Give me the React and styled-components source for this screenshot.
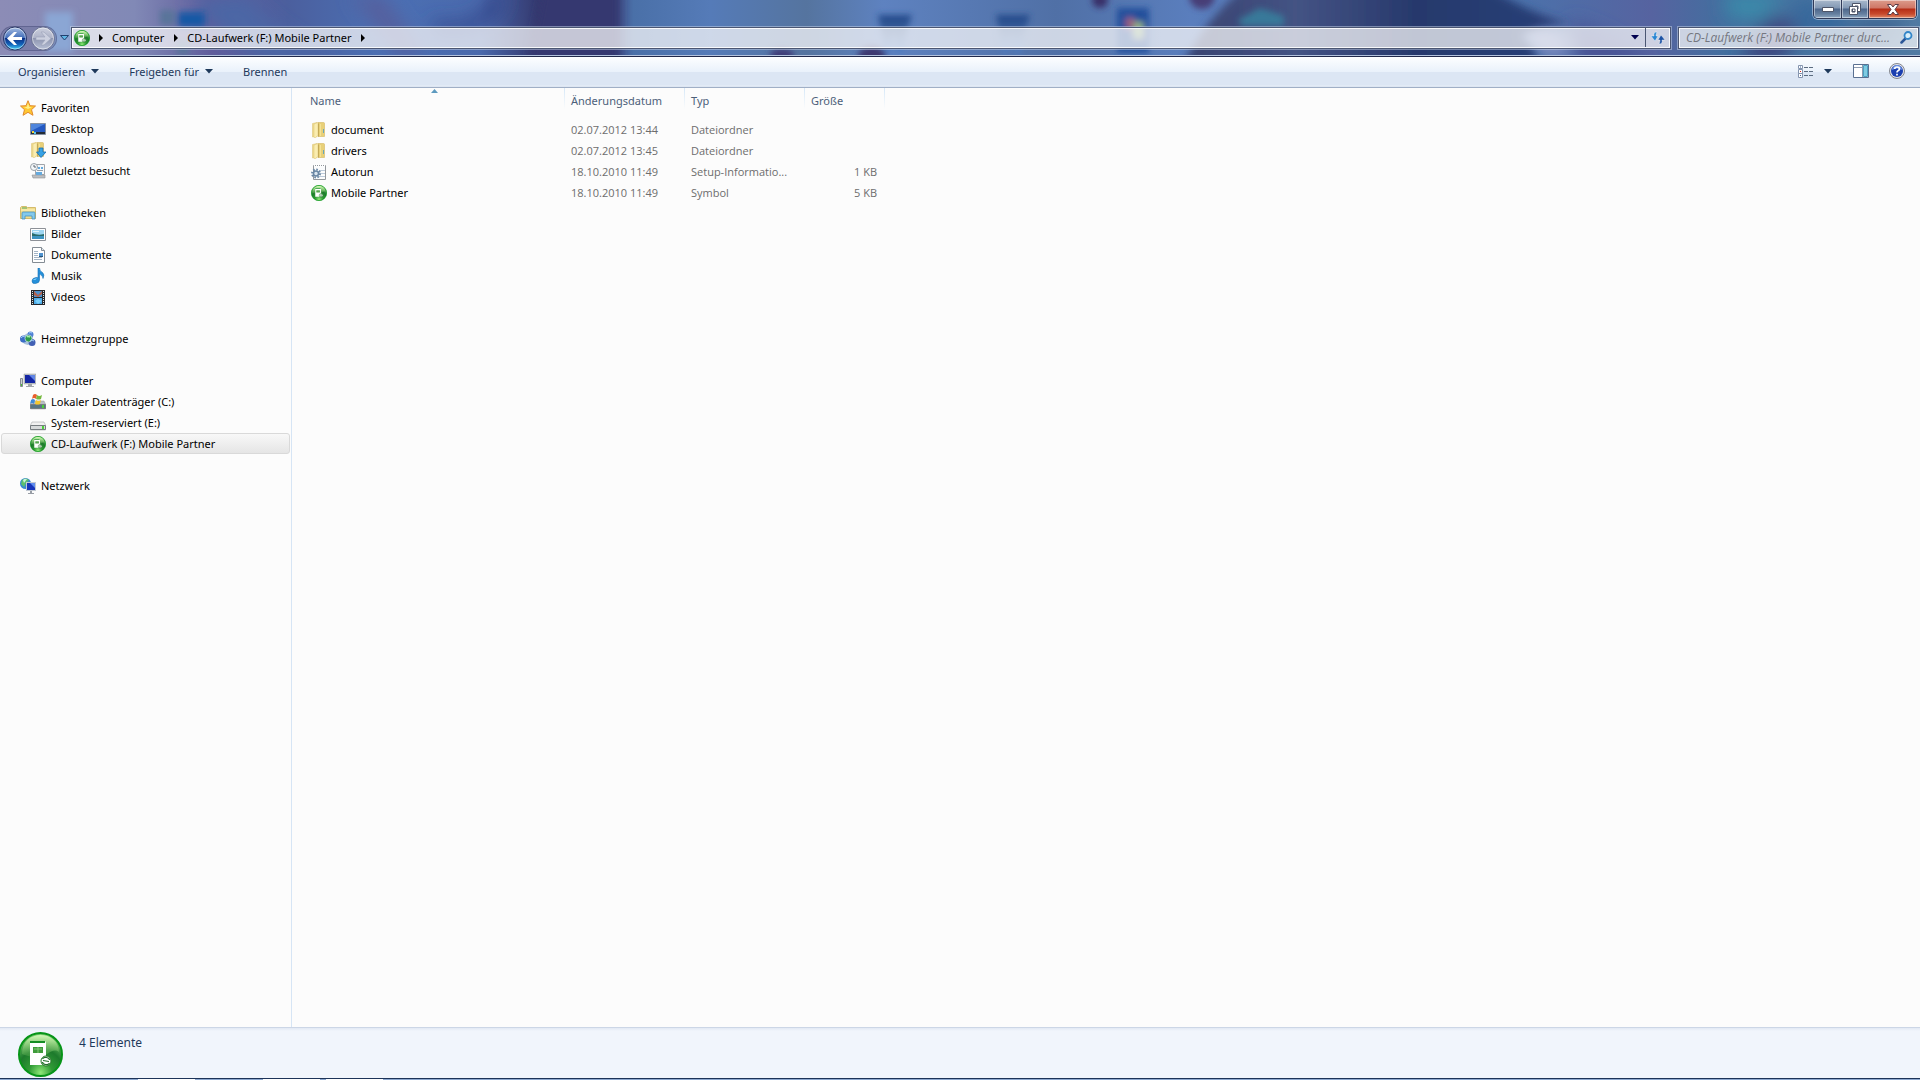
import React from "react";
import styled, { createGlobalStyle, css } from "styled-components";

const GlobalStyle = createGlobalStyle`
  * {
    box-sizing: border-box;
  }

  body {
    margin: 0;
    background: #fcfcfc;
    color: #000;
    font-family: "Noto Sans", "Open Sans", sans-serif;
    font-size: 11px;
    line-height: 21px;
  }

  button, input {
    font: inherit;
    color: inherit;
    margin: 0;
    padding: 0;
    border: 0;
    background: none;
  }

  svg {
    display: block;
    flex: none;
  }
`;

/* WINDOW */
const Window = styled.div`
  display: flex;
  flex-direction: column;
  min-height: 100vh;
`;

/* GLASS FRAME */
const Glass = styled.header`
  position: relative;
  isolation: isolate;
  height: 57px;
  overflow: hidden;
  border-bottom: 1px solid #20284a;
  box-shadow: inset 0 -1px 0 #b4c3de;
`;

const Wallpaper = styled.svg`
  position: absolute;
  z-index: -1;
  top: 0;
  left: 0;
  width: 100%;
  height: 55px;
`;

const TitleRow = styled.div`
  display: flex;
  justify-content: flex-end;
  height: 26px;
  padding-right: 3px;
`;

const WindowButtons = styled.div`
  display: flex;
  height: 19px;
  border: 1px solid #303a58;
  border-top: 0;
  border-radius: 0 0 5px 5px;
  overflow: hidden;
  box-shadow: 0 0 0 1px rgba(220, 232, 248, 0.5);
`;

const WindowButton = styled.button`
  display: flex;
  align-items: center;
  justify-content: center;
  width: ${({ $close }) => ($close ? "48px" : "27px")};
  box-shadow: inset 0 0 0 1px rgba(255, 255, 255, 0.45);
  background: ${({ $close }) =>
    $close
      ? "linear-gradient(#dc9c8c 0, #cf7665 8px, #b52d16 9px, #c84a2c 14px, #e08a68 18px)"
      : "linear-gradient(#a9b9cc 0, #8298b4 8px, #4d678c 9px, #66809f 14px, #8ea8c2 18px)"};

  & + & {
    border-left: 1px solid #303a58;
  }
`;

const NavRow = styled.div`
  display: flex;
  align-items: center;
  height: 24px;
`;

const TravelButtons = styled.div`
  display: flex;
  align-items: center;
  gap: 4px;
  width: 57px;
  height: 25px;
  padding-left: 3px;
  border-radius: 13px;
  background: rgba(90, 96, 140, 0.3);
  box-shadow: inset 0 0 0 1px rgba(60, 66, 110, 0.4);
`;

const PlainButton = styled.button`
  display: flex;
  align-items: center;
  justify-content: center;
`;

const RecentButton = styled(PlainButton)`
  width: 14px;
`;

const glassField = css`
  display: flex;
  align-items: center;
  height: 22px;
  border: 1px solid #4b5672;
  background: rgba(248, 248, 250, 0.74);
  box-shadow: inset 0 0 0 1px rgba(255, 255, 255, 0.85), 0 0 0 1px rgba(200, 212, 232, 0.5);
`;

const AddressBar = styled.nav`
  ${glassField}
  flex: 1;
  padding: 0 0 1px 2px;
`;

const Crumb = styled.button`
  display: flex;
  align-items: center;
  height: 19px;
`;

const CrumbArrow = styled.span`
  display: flex;
  justify-content: center;
  width: ${({ $first }) => ($first ? "22px" : "23px")};
`;

const AddressTools = styled.div`
  display: flex;
  align-self: stretch;
  margin-left: auto;
`;

const AddressTool = styled(PlainButton)`
  width: ${({ $wide }) => ($wide ? "25px" : "20px")};
  border-left: ${({ $wide }) => ($wide ? "1px solid #4b5672" : "0")};
`;

const SearchBox = styled.label`
  ${glassField}
  width: 241px;
  margin: 0 1px 0 7px;
  padding: 0 5px 1px 7px;
`;

const SearchInput = styled.input`
  flex: 1;
  min-width: 0;
  height: 19px;
  outline: 0;
  font-family: "Open Sans", sans-serif;

  &::placeholder {
    color: #757780;
    font-size: 12px;
    font-style: italic;
    opacity: 1;
  }
`;

/* COMMAND BAR */
const CommandBar = styled.div`
  display: flex;
  align-items: center;
  height: 31px;
  padding: 0 15px 2px 18px;
  color: #1e395b;
  border-bottom: 1px solid #a0afc6;
  background: linear-gradient(#fdfeff 0, #e9f1fb 15px, #dce6f4 15px, #dce6f4 28px, #e8eff8 29px, #d3ddec 30px);
`;

const Command = styled.button`
  display: flex;
  align-items: center;
  gap: 6px;
  height: 28px;
  margin-right: 30px;
`;

const CommandIcons = styled.div`
  display: flex;
  align-items: center;
  margin-left: auto;
`;

const IconButton = styled(PlainButton)`
  margin-left: ${({ $gap }) => $gap}px;
`;

/* CONTENT */
const Content = styled.div`
  display: flex;
  flex: 1;
`;

const Sidebar = styled.aside`
  width: 292px;
  padding: 9px 1px 0;
  border-right: 1px solid #d6e5f5;
`;

const TreeGroup = styled.section`
  margin-bottom: 21px;
`;

const TreeItem = styled.a`
  display: flex;
  align-items: center;
  gap: 5px;
  height: 21px;
  padding-left: ${({ $child }) => ($child ? "28px" : "18px")};
  border: 1px solid transparent;
  border-radius: 3px;
  color: #000;
  text-decoration: none;

  ${({ $selected }) =>
    $selected &&
    css`
      border-color: #d9d9d9;
      background: linear-gradient(#f8f8f8, #e5e5e5);
    `}
`;

const Files = styled.main`
  flex: 1;
  padding-left: 12px;
`;

const FileTable = styled.table`
  width: 581px;
  table-layout: fixed;
  border-collapse: separate;
  border-spacing: 0;
`;

const HeadCell = styled.th`
  position: relative;
  width: ${({ $width }) => $width}px;
  height: 31px;
  padding: 2px 6px 8px;
  color: #4c607a;
  font-weight: 400;
  text-align: left;
  background: linear-gradient(#d6e8f8, #fcfcfc) right top / 1px 21px no-repeat;
`;

const SortMark = styled.svg`
  position: absolute;
  top: 1px;
  left: 50%;
  margin-left: -4px;
`;

const Cell = styled.td`
  height: 21px;
  padding: 0 8px 0 6px;
  color: #6d6d6d;
  font-family: "Open Sans", sans-serif;
  overflow: hidden;
  white-space: nowrap;
  text-overflow: ellipsis;
  text-align: ${({ $right }) => ($right ? "right" : "left")};
`;

const FileName = styled.div`
  display: flex;
  align-items: center;
  gap: 4px;
  padding-left: 1px;
  color: #000;
  font-family: "Noto Sans", "Open Sans", sans-serif;
`;

/* DETAILS PANE */
const Details = styled.footer`
  display: flex;
  gap: 16px;
  height: 51px;
  padding: 4px 18px 0;
  overflow: hidden;
  color: #1e395b;
  font-size: 12px;
  border-top: 1px solid #ccd6e6;
  background: linear-gradient(#e2e9f4 0, #f1f5fc 3px);
`;

const Taskbar = styled.div`
  display: flex;
  gap: 6px;
  height: 2px;
  padding-left: 138px;
  border-top: 1px solid #1d3358;
  background: #8da8d0;
`;

const TaskSlot = styled.span`
  width: 57px;
  margin-right: ${({ $gap }) => $gap || 0}px;
  background: #fff;
`;

/* ICONS */
const PartnerIcon = ({ size = 16 }) => (
  <svg width={size} height={size} viewBox="0 0 45 45">
    <defs>
      <radialGradient id="partner" cx="50%" cy="92%" r="90%">
        <stop offset="0" stopColor="#8ee878" />
        <stop offset="0.3" stopColor="#2f9a35" />
        <stop offset="0.6" stopColor="#1d7a2c" />
        <stop offset="1" stopColor="#7ed070" />
      </radialGradient>
      <linearGradient id="partnerShine" x2="0" y2="1">
        <stop offset="0" stopColor="#d4f8b8" />
        <stop offset="1" stopColor="#62b553" stopOpacity="0.3" />
      </linearGradient>
    </defs>
    <circle cx="22.500" cy="22.500" r="21.500" fill="url(#partner)" stroke="#079518" strokeWidth="2" />
    <path d="M4 22C4 9 13 3 22.500 3S41 9 41 20c-7-5-12 5-20 5S9 24 4 22z" fill="url(#partnerShine)" />
    <path d="M12 11q0-2 2-2h12q2 0 2 2v15a6 6 0 0 0-4 7H12z" fill="#fff" />
    <path d="M12 9h15v2H12z" fill="#168d24" />
    <path d="M15 15h10v6H15z" fill="#3f9b3b" />
    <path d="M16 17h8M20 15v6" stroke="#85c878" />
    <circle cx="28" cy="29" r="5" fill="#fff" stroke="#287a2b" />
    <path d="M24.500 27q1-2 4-1.500t3 2.500M31.500 31q-1 2-4 1.500t-3-2.500M25 28.500l6 1" fill="none" stroke="#226f2b" strokeWidth="1.200" />
  </svg>
);

const StarIcon = () => (
  <svg width="16" height="16">
    <path d="M8 .7l2 5 5.500.3-4 3.700L13 15.300l-5-3-5 3 1.500-5.600L.5 6 6 5.700z" fill="#ffc832" stroke="#e08a2e" />
    <path d="M8 3l1.300 4H12L8 9 4 7h2.700z" fill="#fff08a" />
  </svg>
);

const DesktopIcon = () => (
  <svg width="16" height="16">
    <path d="M.5 2.500h15v11H.5z" fill="#2459c2" stroke="#8792a2" />
    <path d="M1 3h14L1 10z" fill="#4f85dc" />
    <path d="M1 11h14v2H1z" fill="#232b36" />
    <path d="M2 10h2v2H2z" fill="#f2d43a" />
    <path d="M4 11h2v2H4z" fill="#55c4ea" />
  </svg>
);

const FolderIcon = ({ download }) => (
  <svg width="16" height="16">
    <path d="M1.500 1.500L6 .5v14l-4.500.5z" fill="#efdc8c" stroke="#d8bf6c" strokeWidth=".5" />
    <path d="M7 .5h5.500q1 0 1 1v13H7z" fill="#e8d078" stroke="#cfae50" strokeWidth=".5" />
    <path d="M3 2l4-1.500v13L4 16l-1-1z" fill="#faedb0" stroke="#dcc478" strokeWidth=".5" />
    <path d="M7 1.500h1V14l-1 1z" fill="#c4a956" />
    <path d="M9 2h1v12H9z" fill="#f4e296" />
    {download ? (
      <path d="M9 6h4v4h3l-5 5.500L6.500 10H9z" fill="#38a2e4" stroke="#176daf" strokeWidth=".8" />
    ) : (
      <path d="M12 7h1v4h-1z" fill="#6aa7b6" />
    )}
  </svg>
);

const RecentIcon = () => (
  <svg width="16" height="16">
    <path d="M5.500 1.500h9v10h-9z" fill="#f6f8fa" stroke="#a1a5aa" />
    <path d="M2 12h13v3H3z" fill="#bcbec0" stroke="#8f9295" strokeWidth=".6" />
    <circle cx="4" cy="4" r="3.500" fill="#f4f7f9" stroke="#9aa2a9" />
    <path d="M4 2v2h2" fill="none" stroke="#5b6570" />
    <path d="M8 4h2v2H8zM11 4h2v2h-2zM6 9h6v3H6z" fill="#64aade" />
    <path d="M7 7.500h6" stroke="#98a0a7" />
  </svg>
);

const LibraryIcon = () => (
  <svg width="16" height="16">
    <path d="M.5 2.500l1-1h5l1 1h8v11H.5z" fill="#f0dc8c" stroke="#d4bb6c" />
    <path d="M2 3h5" stroke="#56aa58" />
    <path d="M1 5h14" stroke="#fff5c0" />
    <path d="M2 14V8q0-1 1-1h11q1 0 1 1v6h-3v-3H5v3z" fill="#83c9ec" stroke="#4792c0" strokeWidth=".8" />
  </svg>
);

const PictureIcon = () => (
  <svg width="16" height="16">
    <path d="M.5 2.500h15v12H.5z" fill="#fff" stroke="#8d9197" />
    <path d="M2 4h12v9H2z" fill="#9ed6f2" />
    <path d="M2 7q6 3 12 1v3H2z" fill="#286c6b" />
    <path d="M2 10h12v3H2z" fill="#3c94c2" />
    <path d="M3 5h6v1H3z" fill="#e4f6fc" />
  </svg>
);

const DocumentIcon = () => (
  <svg width="16" height="16">
    <path d="M2.500.5h9l3 3v12h-12z" fill="#fff" stroke="#848c94" />
    <path d="M11.500.5v3h3" fill="#e2e9ef" stroke="#848c94" />
    <path d="M4 4.500h4M4 6.500h4M4 8.500h4M4 10.500h8M4 12.500h8" stroke="#a3b4c6" />
    <path d="M9 6h4v4H9z" fill="#4f93d0" />
    <path d="M9 9h4v1H9z" fill="#28567a" />
  </svg>
);

const MusicIcon = () => (
  <svg width="16" height="16">
    <path d="M8 0h1.500q0 3 3 4.500 2.500 2 .5 6 0-3-3.500-4.500V12q0 3-4 3.500Q2 16 2 13t4-3.500q1.500-.3 2 .3z" fill="#2590da" stroke="#1670b5" strokeWidth=".6" />
    <path d="M3 12q1-2 4-1.500Q6 12 3 12z" fill="#8ddaff" />
  </svg>
);

const VideoIcon = () => (
  <svg width="16" height="16">
    <path d="M1 1h14v15H1z" fill="#25282c" />
    <path d="M4 2h8v6H4z" fill="#4c91cc" />
    <path d="M4 9h8v6H4z" fill="#4daae6" />
    <path d="M4 2l4 4 4-4v3L8 8 4 6z" fill="#b2604c" />
    <path d="M5 12l3-2 4 2-4 3z" fill="#78d0fc" />
    <path d="M2.500 2v13M13.500 2v13" stroke="#e0e4e6" strokeDasharray="1 1" />
  </svg>
);

const HomegroupIcon = () => (
  <svg width="16" height="16">
    <path d="M3 6Q8-1 13 5v6q-5 6-11 0z" fill="#a8c2dc" />
    <circle cx="10.500" cy="3.500" r="3" fill="#4f80d4" />
    <circle cx="3.500" cy="8" r="3.500" fill="#3c6ec6" />
    <circle cx="12" cy="11.500" r="3.500" fill="#4260b4" />
    <circle cx="8.500" cy="7.500" r="3.500" fill="#2c9b4a" stroke="#d4e4ee" strokeWidth=".7" />
    <path d="M1 7q2-3 4-1M10 10q2-2 4 0M9 2q2-1 3 0" fill="none" stroke="#a0cdf7" />
    <path d="M7 6q1-1 3 0" fill="none" stroke="#a6efaa" strokeWidth="1.500" />
  </svg>
);

const ComputerIcon = () => (
  <svg width="16" height="16">
    <path d="M.5 5.500h2v8h-2z" fill="#ccd1d4" stroke="#858b91" />
    <path d="M1 11h1v2H1z" fill="#4ebd3c" />
    <path d="M4 1h12v10H4z" fill="#bfc3c6" stroke="#969a9e" strokeWidth=".5" />
    <path d="M5 2h10v8H5z" fill="#1426a4" />
    <path d="M9 2h6v6z" fill="#6085e5" />
    <path d="M8 11h4v2h2v1H6v-1h2z" fill="#a2a6aa" />
  </svg>
);

const DriveIcon = ({ system }) => (
  <svg width="16" height="16">
    <path d="M2 7h12l2 4v3q0 1-1 1H1q-1 0-1-1v-3z" fill={system ? "#b7bec4" : "#f1f1f1"} stroke="#969a9d" strokeWidth=".5" />
    <path d="M.5 10.500h15v4H.5z" fill={system ? "#577583" : "#d7dadb"} stroke="#777d81" />
    <path d="M12 11h2v3h-2z" fill="#4ccf38" />
    {system && (
      <>
        <path d="M3 1q2-2 4 0L6 5Q4 3 2 5z" fill="#e95e2c" />
        <path d="M7 1q2 2 5 0l-1 4q-2 1-5 0z" fill="#75b93e" />
        <path d="M1 6q2-2 4 0l-1 4q-2-2-4 0z" fill="#3f8bd8" />
        <path d="M6 6q2 2 5 0l-1 4q-2 1-5 0z" fill="#f6c82d" />
      </>
    )}
  </svg>
);

const NetworkIcon = () => (
  <svg width="16" height="16">
    <circle cx="5.500" cy="5.500" r="5.500" fill="#3988d2" />
    <path d="M2 2q4-3 7 0L6 5 4 9 1 6z" fill="#5dc06c" />
    <path d="M3 2q2-2 4-1L4 5z" fill="#c8f2dc" />
    <path d="M6 4h10v9H6z" fill="#c2c9d3" />
    <path d="M7 5h8v7H7z" fill="#1735ba" />
    <path d="M10 5h5v5z" fill="#5e8cee" />
    <path d="M10 13h2v2h2v1H8v-1h2z" fill="#989da5" />
  </svg>
);

const SetupIcon = () => (
  <svg width="16" height="16">
    <path d="M2.500 1.500h12v14h-12z" fill="#fbfcfd" stroke="#92979c" />
    <path d="M3 1.500h12" stroke="#fff" strokeWidth="2" strokeDasharray="1 1" />
    <path d="M8 6.500h6M8 9.500h6M8 12.500h6" stroke="#bccada" />
    <circle cx="5" cy="9.500" r="4" fill="none" stroke="#6a87a4" strokeWidth="2" strokeDasharray="1.600 1.500" />
    <circle cx="5" cy="9.500" r="2.500" fill="#dbe6ef" stroke="#6a87a4" strokeWidth="1.500" />
  </svg>
);

const TravelIcon = ({ back }) => (
  <svg width="24" height="25" viewBox="0 0 24 25">
    <defs>
      <linearGradient id="backFill" x2="0" y2="1">
        <stop offset="0" stopColor="#a9c0e4" />
        <stop offset=".48" stopColor="#3f6bb8" />
        <stop offset=".5" stopColor="#0b3188" />
        <stop offset=".75" stopColor="#1261b8" />
        <stop offset="1" stopColor="#48dcff" />
      </linearGradient>
      <linearGradient id="forwardFill" x2="0" y2="1">
        <stop offset="0" stopColor="#cdd1df" />
        <stop offset=".48" stopColor="#adb2c7" />
        <stop offset=".5" stopColor="#8e95b0" />
        <stop offset="1" stopColor="#b9c2d7" />
      </linearGradient>
    </defs>
    <circle cx="12" cy="12.500" r="11.500" fill={back ? "url(#backFill)" : "url(#forwardFill)"} stroke={back ? "#2b3967" : "#6a7293"} />
    <circle cx="12" cy="12.500" r="10.500" fill="none" stroke="#fff" strokeOpacity=".5" />
    {back ? (
      <path d="M4 12.500l7-6.500h3l-4 5h9v3h-9l4 5h-3z" fill="#fff" />
    ) : (
      <path d="M20 12.500L13 6h-3l4 5H5v3h9l-4 5h3z" fill="#ccd0df" stroke="#9aa2b9" strokeWidth=".6" />
    )}
  </svg>
);

const DownArrow = ({ color = "#1e395b" }) => (
  <svg width="8" height="5">
    <path d="M0 0h8L4 4.500z" fill={color} />
  </svg>
);

const RightArrow = () => (
  <svg width="4" height="8">
    <path d="M0 0l4 4-4 4z" fill="#000" />
  </svg>
);

/* blurred desktop that shines through the frame */
const Desktop = () => (
  <Wallpaper viewBox="0 0 1920 55" preserveAspectRatio="none" aria-hidden="true">
    <defs>
      <linearGradient id="sky">
        <stop offset="0" stopColor="#8c8cb6" />
        <stop offset=".07" stopColor="#8189b6" />
        <stop offset=".11" stopColor="#605d9c" />
        <stop offset=".15" stopColor="#4b5f9e" />
        <stop offset=".2" stopColor="#4b70b4" />
        <stop offset=".25" stopColor="#4a69ac" />
        <stop offset=".28" stopColor="#34396f" />
        <stop offset=".315" stopColor="#373873" />
        <stop offset=".33" stopColor="#4a70a8" />
        <stop offset=".37" stopColor="#557bb8" />
        <stop offset=".42" stopColor="#55749f" />
        <stop offset=".46" stopColor="#5e82c0" />
        <stop offset=".55" stopColor="#5070a6" />
        <stop offset=".62" stopColor="#5a7ebd" />
        <stop offset=".79" stopColor="#4b72ab" />
        <stop offset=".86" stopColor="#5663a0" />
        <stop offset=".9" stopColor="#426f9f" />
        <stop offset="1" stopColor="#517ba3" />
      </linearGradient>
      <linearGradient id="hill">
        <stop offset="0" stopColor="#38426f" />
        <stop offset=".3" stopColor="#445384" />
        <stop offset=".6" stopColor="#27396c" />
        <stop offset="1" stopColor="#293f78" />
      </linearGradient>
      <linearGradient id="letter" x2="0" y2="1">
        <stop offset="0" stopColor="#1f4688" />
        <stop offset=".5" stopColor="#41659f" />
        <stop offset="1" stopColor="#4f80c8" />
      </linearGradient>
      <filter id="far" x="-100%" y="-100%" width="300%" height="300%">
        <feGaussianBlur stdDeviation="9" />
      </filter>
      <filter id="soft" x="-20%" y="-50%" width="140%" height="200%">
        <feGaussianBlur stdDeviation="4" />
      </filter>
      <filter id="softer" x="-20%" y="-50%" width="140%" height="200%">
        <feGaussianBlur stdDeviation="3" />
      </filter>
    </defs>
    <path d="M0 0h1920v57H0z" fill="url(#sky)" />
    <g filter="url(#far)">
      <path d="M190 0q30 40 80 60h60Q260 20 250-5z" fill="#4b66a5" />
      <path d="M350-5q20 25 45 60h30Q400 20 385-5z" fill="#54619f" />
      <path d="M430 20q50 10 60-25h18q-10 40-70 38z" fill="#344a8e" />
      <path d="M1515 26q30 0 55 18l-10 14q-30-10-45-32z" fill="#8d96c8" />
      <path d="M1570 20q60 20 80 45h-70z" fill="#485394" />
      <path d="M1725-5h60l-25 25-32-4z" fill="#3b8baa" />
      <path d="M1760 25q28-18 40 8l-20 30h-40z" fill="#3c467f" />
      <path d="M1790 0h50l10 40h-50z" fill="#39699c" />
      <path d="M1860 20h50l-40 40h-40z" fill="#3d6390" />
    </g>
    <g filter="url(#soft)">
      <path d="M545-20h75v95h-95z" fill="#34376f" />
      <path d="M1180 70q30-60 75-90h225q35 28 90 44-30 0-50 12 15 10 20 34z" fill="url(#hill)" />
    </g>
    <g filter="url(#softer)">
      <path d="M45 12h28v40H45z" fill="#8cacdc" opacity=".8" />
      <path d="M178 12h27v15h-27z" fill="#1459a5" />
      <path d="M160 10h15v15h-15zM177 40h12v15h-12z" fill="#58749a" />
      <path d="M878 15h34l-4 12-6 26h-5l-3-20-4 20h-5zM996 15h34l-4 12-6 26h-5l-3-20-4 20h-5z" fill="url(#letter)" />
      <path d="M1117 8h32v45h-32z" fill="#214f9b" />
      <path d="M1126 18h8v10h-8z" fill="#a0607a" />
      <path d="M1134 22h9v16h-9z" fill="#95b582" />
      <circle cx="1100" cy="0" r="8" fill="#382e68" />
      <circle cx="1202" cy="-4" r="13" fill="#463d76" />
      <ellipse cx="782" cy="56" rx="12" ry="8" fill="#413c78" />
      <ellipse cx="872" cy="56" rx="14" ry="10" fill="#3d3870" />
      <path d="M1238 20l22-12 24 8v10h-42z" fill="#39799a" />
    </g>
  </Wallpaper>
);

const tree = [
  {
    label: "Favoriten",
    icon: <StarIcon />,
    items: [
      { label: "Desktop", icon: <DesktopIcon /> },
      { label: "Downloads", icon: <FolderIcon download /> },
      { label: "Zuletzt besucht", icon: <RecentIcon /> },
    ],
  },
  {
    label: "Bibliotheken",
    icon: <LibraryIcon />,
    items: [
      { label: "Bilder", icon: <PictureIcon /> },
      { label: "Dokumente", icon: <DocumentIcon /> },
      { label: "Musik", icon: <MusicIcon /> },
      { label: "Videos", icon: <VideoIcon /> },
    ],
  },
  { label: "Heimnetzgruppe", icon: <HomegroupIcon />, items: [] },
  {
    label: "Computer",
    icon: <ComputerIcon />,
    items: [
      { label: "Lokaler Datenträger (C:)", icon: <DriveIcon system /> },
      { label: "System-reserviert (E:)", icon: <DriveIcon /> },
      { label: "CD-Laufwerk (F:) Mobile Partner", icon: <PartnerIcon />, selected: true },
    ],
  },
  { label: "Netzwerk", icon: <NetworkIcon />, items: [] },
];

const files = [
  { name: "document", icon: <FolderIcon />, date: "02.07.2012 13:44", type: "Dateiordner", size: "" },
  { name: "drivers", icon: <FolderIcon />, date: "02.07.2012 13:45", type: "Dateiordner", size: "" },
  { name: "Autorun", icon: <SetupIcon />, date: "18.10.2010 11:49", type: "Setup-Informatio...", size: "1 KB" },
  { name: "Mobile Partner", icon: <PartnerIcon />, date: "18.10.2010 11:49", type: "Symbol", size: "5 KB" },
];

export default function App() {
  return (
    <Window>
      <GlobalStyle />
      <Glass>
        <Desktop />
        <TitleRow>
          <WindowButtons>
            <WindowButton aria-label="Minimieren">
              <svg width="12" height="8">
                <path d="M.5 2.500h11v4H.5z" fill="#fff" stroke="#4d5568" />
              </svg>
            </WindowButton>
            <WindowButton aria-label="Verkleinern">
              <svg width="12" height="12" fillRule="evenodd">
                <path d="M3.500.5h8v8h-8zM6 3v3h3V3z" fill="#fff" stroke="#4d5568" />
                <path d="M.5 3.500h8v8h-8zM3 6v3h3V6z" fill="#fff" stroke="#4d5568" />
              </svg>
            </WindowButton>
            <WindowButton $close aria-label="Schließen">
              <svg width="12" height="11">
                <path d="M.5.5h3.500l2 2.500L8 .5h3.500l-3.500 5 3.500 5H8L6 8l-2 2.500H.5l3.500-5z" fill="#fff" stroke="#5a3c48" />
              </svg>
            </WindowButton>
          </WindowButtons>
        </TitleRow>
        <NavRow>
          <TravelButtons>
            <PlainButton aria-label="Zurück">
              <TravelIcon back />
            </PlainButton>
            <PlainButton aria-label="Vorwärts">
              <TravelIcon />
            </PlainButton>
          </TravelButtons>
          <RecentButton aria-label="Zuletzt besuchte Seiten">
            <svg width="9" height="6">
              <path d="M.5.5h8l-4 4.500z" fill="#5fb6e6" stroke="#20406f" />
            </svg>
          </RecentButton>
          <AddressBar aria-label="Adresse">
            <PartnerIcon />
            <CrumbArrow $first>
              <RightArrow />
            </CrumbArrow>
            <Crumb>Computer</Crumb>
            <CrumbArrow>
              <RightArrow />
            </CrumbArrow>
            <Crumb>CD-Laufwerk (F:) Mobile Partner</Crumb>
            <CrumbArrow>
              <RightArrow />
            </CrumbArrow>
            <AddressTools>
              <AddressTool aria-label="Vorherige Adressen">
                <DownArrow color="#000050" />
              </AddressTool>
              <AddressTool $wide aria-label="Aktualisieren">
                <svg width="14" height="14">
                  <path d="M6 1Q2 1 3 5H0l4 5 3-5H5q0-2 1-4z" fill="#2a86d2" stroke="#fff" strokeWidth=".4" />
                  <path d="M8 13q4 0 3-4h3l-4-5-3 5h2q0 2-1 4z" fill="#1c52a4" stroke="#fff" strokeWidth=".4" />
                </svg>
              </AddressTool>
            </AddressTools>
          </AddressBar>
          <SearchBox>
            <SearchInput aria-label="Suchen" placeholder="CD-Laufwerk (F:) Mobile Partner durc..." />
            <svg width="13" height="13">
              <path d="M1.500 11.500L6 7" stroke="#2c5797" strokeWidth="2.500" strokeLinecap="round" />
              <circle cx="8" cy="4.500" r="3.500" fill="#d8eefa" stroke="#3285c8" strokeWidth="1.800" />
            </svg>
          </SearchBox>
        </NavRow>
      </Glass>

      <CommandBar>
        <Command>
          Organisieren <DownArrow />
        </Command>
        <Command>
          Freigeben für <DownArrow />
        </Command>
        <Command>Brennen</Command>
        <CommandIcons>
          <IconButton $gap={0} aria-label="Ansicht ändern">
            <svg width="16" height="13">
              <path d="M.5.500h4v3h-4zM.5 4.500h4v4h-4zM.5 8.500h4v4h-4z" fill="#fff" stroke="#8494ae" />
              <path d="M2 2h1M2 10.500h1" stroke="#3f649c" />
              <path d="M2 6h1v1H2z" fill="#d02a20" />
              <path d="M6 2.500h10M6 6.500h10M6 10.500h10" stroke="#5c6c80" strokeDasharray="4 1" />
            </svg>
          </IconButton>
          <IconButton $gap={10} aria-label="Weitere Optionen">
            <DownArrow />
          </IconButton>
          <IconButton $gap={21} aria-label="Vorschaufenster einblenden">
            <svg width="16" height="14">
              <path d="M.5.5h15v13H.5z" fill="#fff" stroke="#5a7091" />
              <path d="M1 3.500h9M9.500 1v12" stroke="#8d9bb0" />
              <path d="M10.500 1.500h4v11h-4z" fill="#7fcbe2" stroke="#4ca2c2" />
            </svg>
          </IconButton>
          <IconButton $gap={20} aria-label="Hilfe">
            <svg width="16" height="16">
              <circle cx="8" cy="8" r="7.500" fill="#e5e6ea" stroke="#83868f" />
              <circle cx="8" cy="8" r="6" fill="#1b3fb0" />
              <path d="M3 7a5 5 0 0 1 10 0q-5-3-10 0z" fill="#6d92e0" />
              <path d="M5.700 6q0-2 2.400-2t2.300 2q0 1-1.400 1.700Q8 8.200 8 9.500M8 10.800v1.600" fill="none" stroke="#fff" strokeWidth="1.700" />
            </svg>
          </IconButton>
        </CommandIcons>
      </CommandBar>

      <Content>
        <Sidebar>
          {tree.map((group) => (
            <TreeGroup key={group.label}>
              <TreeItem href="#">
                {group.icon}
                {group.label}
              </TreeItem>
              {group.items.map((item) => (
                <TreeItem key={item.label} href="#" $child $selected={item.selected}>
                  {item.icon}
                  {item.label}
                </TreeItem>
              ))}
            </TreeGroup>
          ))}
        </Sidebar>
        <Files>
          <FileTable>
            <thead>
              <tr>
                <HeadCell $width={261}>
                  Name
                  <SortMark width="7" height="4">
                    <path d="M0 4l3.500-4L7 4z" fill="#5d9abf" />
                  </SortMark>
                </HeadCell>
                <HeadCell $width={120}>Änderungsdatum</HeadCell>
                <HeadCell $width={120}>Typ</HeadCell>
                <HeadCell $width={80}>Größe</HeadCell>
              </tr>
            </thead>
            <tbody>
              {files.map((file) => (
                <tr key={file.name}>
                  <Cell>
                    <FileName>
                      {file.icon}
                      {file.name}
                    </FileName>
                  </Cell>
                  <Cell>{file.date}</Cell>
                  <Cell>{file.type}</Cell>
                  <Cell $right>{file.size}</Cell>
                </tr>
              ))}
            </tbody>
          </FileTable>
        </Files>
      </Content>

      <Details>
        <PartnerIcon size={45} />
        <span>4 Elemente</span>
      </Details>
      <Taskbar aria-hidden="true">
        <TaskSlot $gap={62} />
        <TaskSlot />
        <TaskSlot />
      </Taskbar>
    </Window>
  );
}
